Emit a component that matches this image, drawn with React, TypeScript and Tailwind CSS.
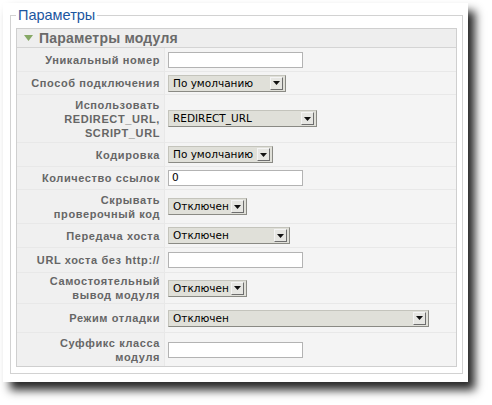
import React from 'react';

type Field =
  | { kind: 'input'; value?: string }
  | { kind: 'select'; value: string; width: number };

type Row = { label: React.ReactNode; h: number; field: Field };

const rows: Row[] = [
  { label: 'Уникальный номер', h: 24, field: { kind: 'input' } },
  { label: 'Способ подключения', h: 23, field: { kind: 'select', value: 'По умолчанию', width: 118 } },
  {
    label: (
      <>
        Использовать
        <br />
        REDIRECT_URL,
        <br />
        SCRIPT_URL
      </>
    ),
    h: 48,
    field: { kind: 'select', value: 'REDIRECT_URL', width: 149 },
  },
  { label: 'Кодировка', h: 24, field: { kind: 'select', value: 'По умолчанию', width: 105 } },
  { label: 'Количество ссылок', h: 23, field: { kind: 'input', value: '0' } },
  {
    label: (
      <>
        Скрывать
        <br />
        проверочный код
      </>
    ),
    h: 34,
    field: { kind: 'select', value: 'Отключен', width: 79 },
  },
  { label: 'Передача хоста', h: 24, field: { kind: 'select', value: 'Отключен', width: 122 } },
  { label: 'URL хоста без http://', h: 25, field: { kind: 'input' } },
  {
    label: (
      <>
        Самостоятельный
        <br />
        вывод модуля
      </>
    ),
    h: 31,
    field: { kind: 'select', value: 'Отключен', width: 79 },
  },
  { label: 'Режим отладки', h: 29, field: { kind: 'select', value: 'Отключен', width: 261 } },
  {
    label: (
      <>
        Суффикс класса
        <br />
        модуля
      </>
    ),
    h: 33,
    field: { kind: 'input' },
  },
];

function Select({ value, width }: { value: string; width: number }) {
  return (
    <div
      className="h-[17px] flex items-center justify-between bg-[#e0e0d9] border border-[#c4c4bc] border-r-[#8a8a84] border-b-[#8a8a84] pl-[4px] pr-[2px] font-['DejaVu_Sans',sans-serif] text-[10.5px] text-black"
      style={{ width }}
    >
      <span className="leading-none whitespace-nowrap">{value}</span>
      <span className="w-[13px] h-[13px] flex items-center justify-center bg-[#e6e6e2] border border-[#f4f4f4] border-r-[#6e6e6e] border-b-[#6e6e6e]">
        <svg width="7" height="4" viewBox="0 0 7 4">
          <path d="M0 0H7L3.5 4Z" fill="#111" />
        </svg>
      </span>
    </div>
  );
}

function TextInput({ value }: { value?: string }) {
  return (
    <div className="w-[135px] h-[16px] bg-white border border-[#b3b3b3] flex items-center pl-[3px] font-['DejaVu_Sans',sans-serif] text-[10.5px] text-black">
      {value}
    </div>
  );
}

export default function App() {
  return (
    <div className="w-[492px] h-[405px] bg-white pt-[3px] pl-[3px] font-['Liberation_Sans',Arial,sans-serif]">
      <div className="w-[465px] h-[379px] bg-white shadow-[7px_8px_9px_rgba(0,0,0,0.85)] pl-[7px] pr-[5px] pt-[4px]">
        <fieldset className="border border-[#d2d2d2] pl-[5px] pr-[5px] pb-[6px]">
          <legend className="px-[2px] text-[14.5px] leading-[17px] text-[#1c56a0] tracking-[0px]">
            Параметры
          </legend>
          <div className="border border-[#cfcfcf] bg-[#f4f4f4] mt-[4px]">
            <div className="h-[19px] flex items-center gap-[6px] pl-[7px] bg-[#eeeeee] border-b border-[#d4d4d4]">
              <svg width="9" height="6" viewBox="0 0 9 6">
                <path d="M0 0H9L4.5 6Z" fill="#86a865" />
              </svg>
              <span className="text-[14px] font-bold text-[#6a6a6a] tracking-[0.2px] leading-none">
                Параметры модуля
              </span>
            </div>
            {rows.map((r, i) => (
              <div key={i} className="flex border-b border-[#e8e8e8] last:border-b-0" style={{ height: r.h }}>
                <div className="w-[148px] shrink-0 flex items-center justify-end text-right pr-[4px] bg-[#f0f0f0] border-r border-[#e8e8e8] text-[11px] leading-[14px] font-bold text-[#666] tracking-[0.6px]">
                  <span>{r.label}</span>
                </div>
                <div className="flex-1 flex items-center pl-[3px]">
                  {r.field.kind === 'input' ? (
                    <TextInput value={r.field.value} />
                  ) : (
                    <Select value={r.field.value} width={r.field.width} />
                  )}
                </div>
              </div>
            ))}
          </div>
        </fieldset>
      </div>
    </div>
  );
}
